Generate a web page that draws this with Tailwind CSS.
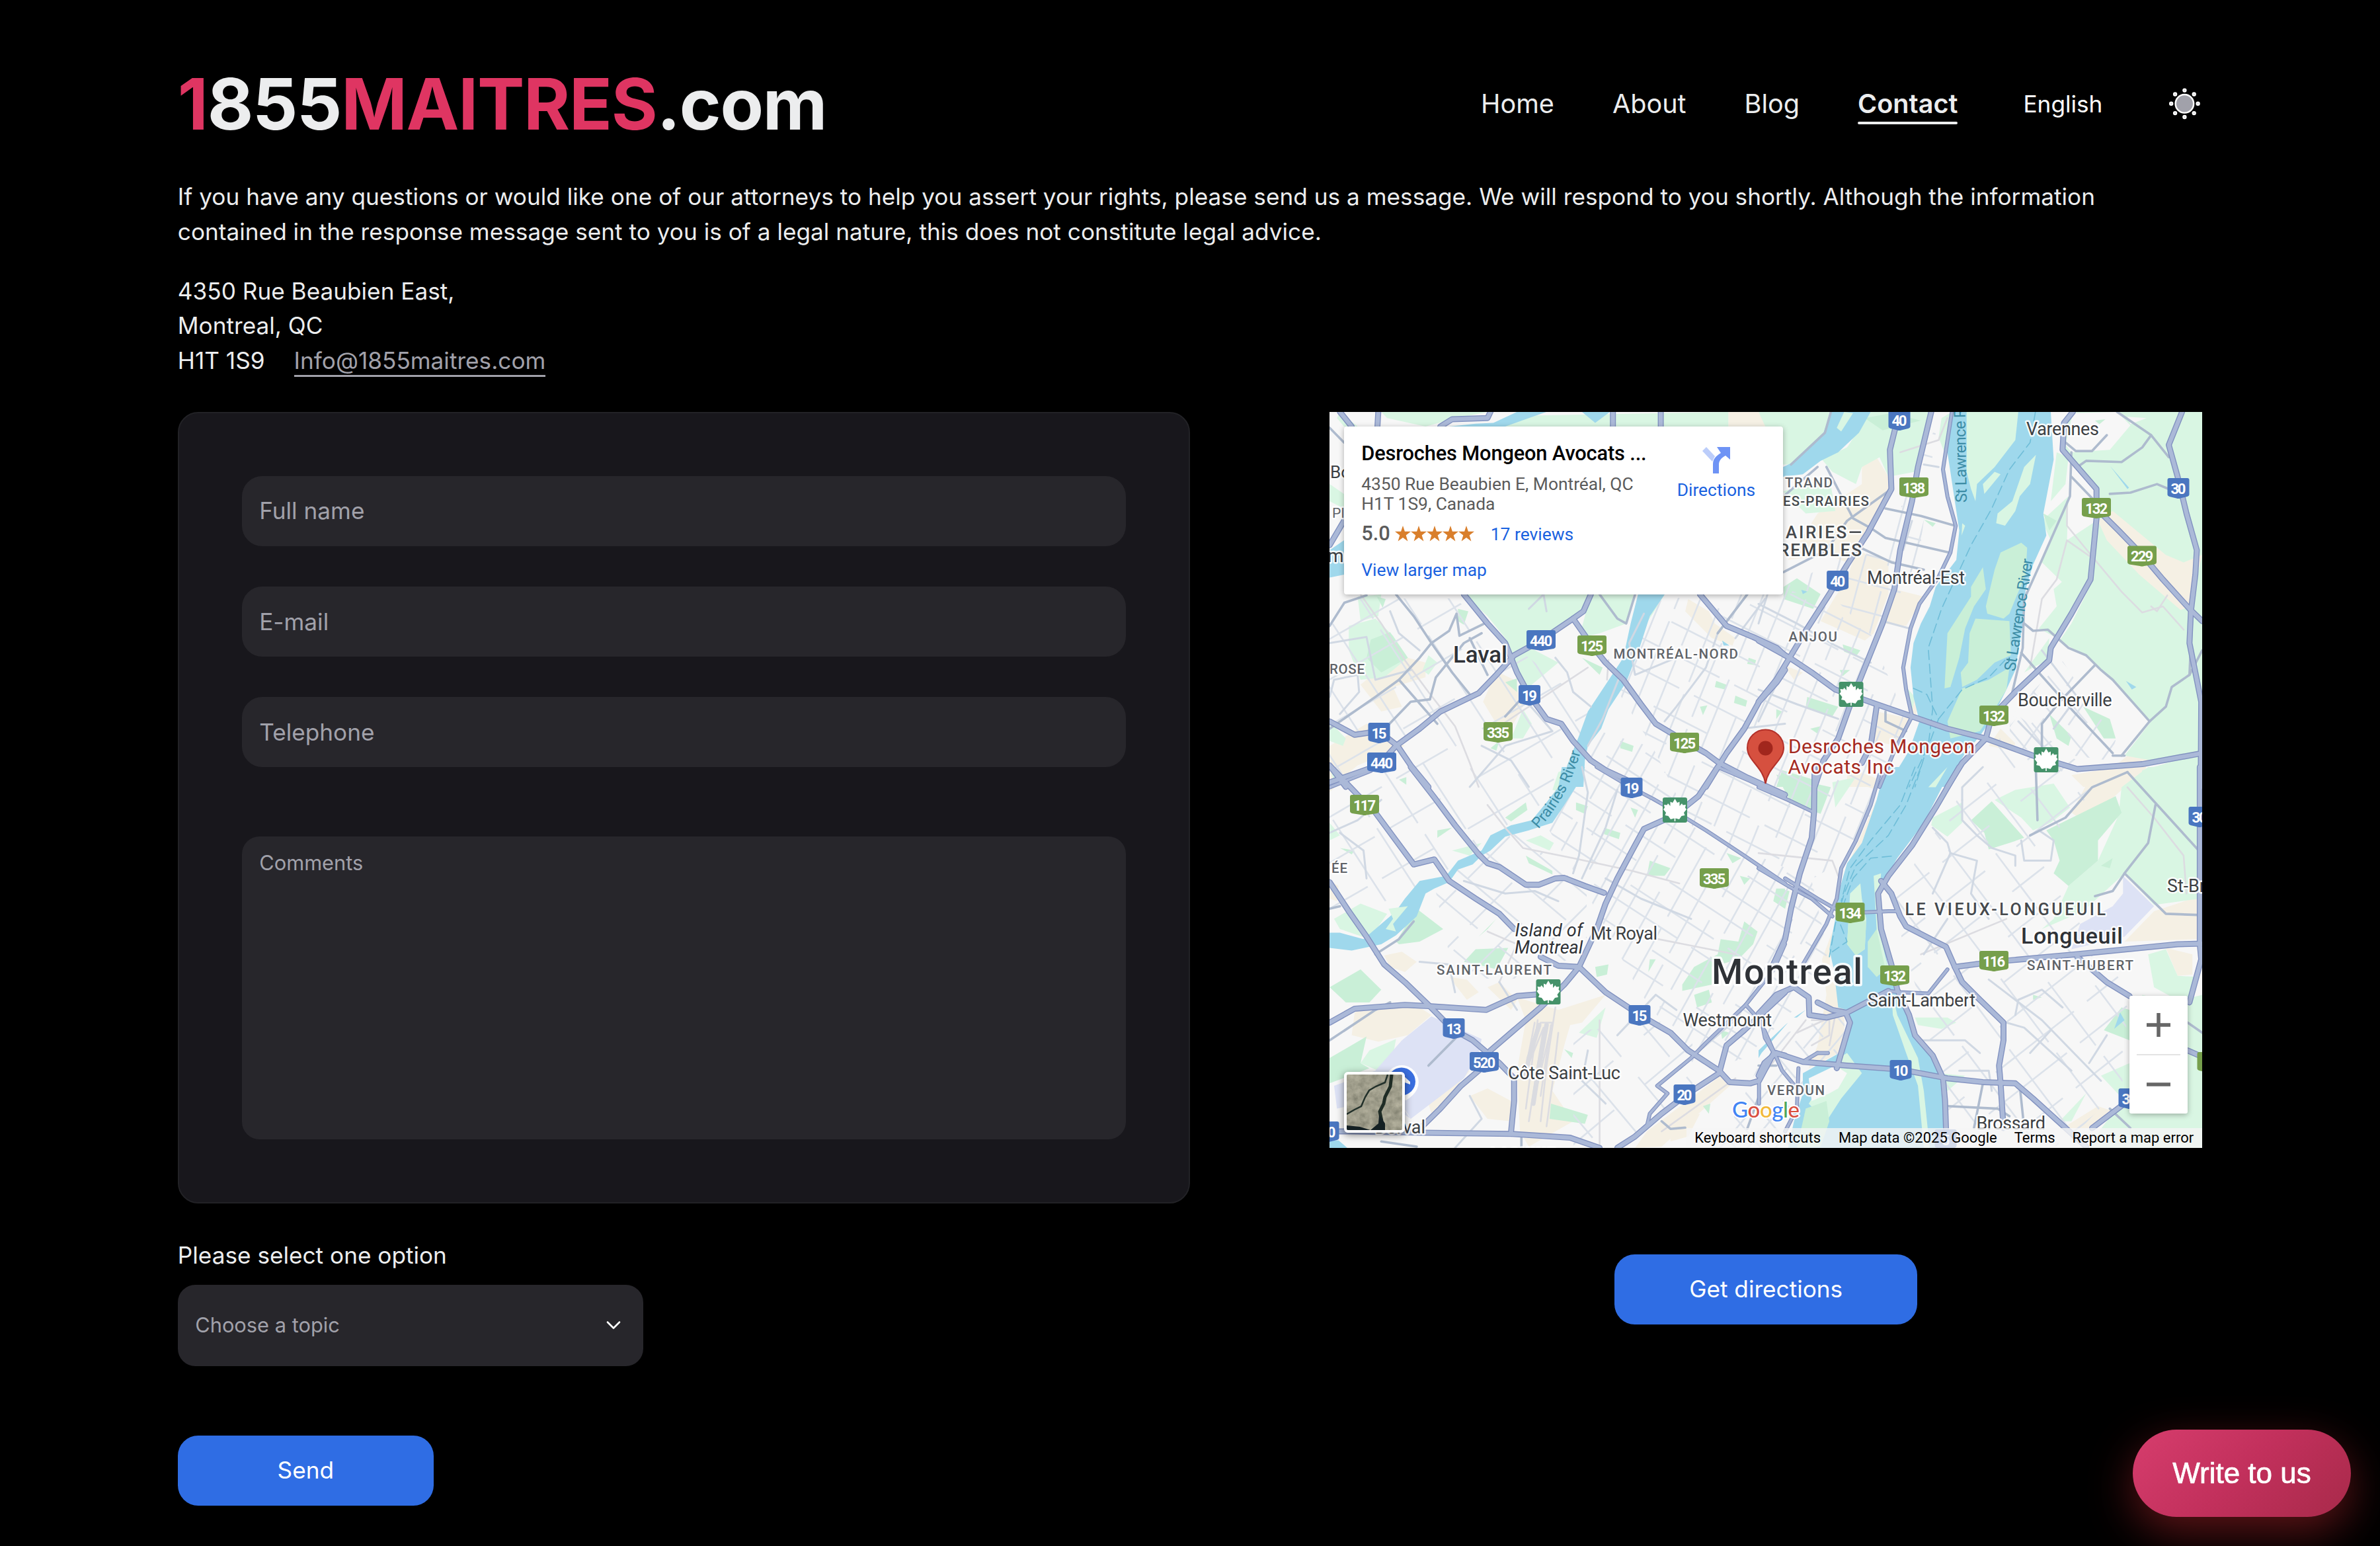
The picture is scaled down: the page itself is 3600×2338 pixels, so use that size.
<!DOCTYPE html>
<html lang="en">
<head>
<meta charset="utf-8">
<title>Contact - 1855MAITRES.com</title>
<script src="https://cdn.jsdelivr.net/npm/@tailwindcss/browser@4"></script>
</head>
<body class="bg-black text-[#ecedee] font-[Inter,sans-serif] text-[35.2px] leading-[52.8px] min-h-[2338px] overflow-hidden">
<div class="mx-auto w-[3062.4px]">

  <header class="flex h-[271px] items-center justify-between pt-[42px]">
    <a id="logo" class="text-[107px] leading-[110px] font-bold tracking-[-1.3px] whitespace-nowrap"><span class="text-[#df3562]">1</span>855<span class="text-[#df3562]">MAITRES</span>.com</a>
    <nav class="flex items-center text-[39.6px] leading-[60px]">
      <a class="mr-[88px]">Home</a>
      <a class="mr-[88px]">About</a>
      <a class="mr-[88px]">Blog</a>
      <a class="relative mr-[99px] font-semibold">Contact<span class="absolute left-0 right-0 top-[57px] h-[4.4px] rounded-full bg-[#ecedee]"></span></a>
      <a class="mr-[98px] text-[35.2px] text-white">English</a>
      <svg class="size-[52.8px]" viewBox="0 0 52.8 52.8" fill="#a1a1aa" stroke="#fff" stroke-width="2.4">
        <circle cx="26.4" cy="26.8" r="13.8"/>
        <g fill="#c4c4ca" stroke-width="2.2"><circle cx="26.4" cy="6.6" r="2.1"/><circle cx="26.4" cy="47" r="2.1"/><circle cx="6.2" cy="26.8" r="2.1"/><circle cx="46.6" cy="26.8" r="2.1"/><circle cx="12.1" cy="12.5" r="2.1"/><circle cx="40.7" cy="12.5" r="2.1"/><circle cx="12.1" cy="41.1" r="2.1"/><circle cx="40.7" cy="41.1" r="2.1"/></g>
      </svg>
    </nav>
  </header>

  <p class="whitespace-nowrap tracking-[0.01px]">If you have any questions or would like one of our attorneys to help you assert your rights, please send us a message. We will respond to you shortly. Although the information<br>contained in the response message sent to you is of a legal nature, this does not constitute legal advice.</p>

  <address class="mt-[37px] h-[209.4px] not-italic">4350 Rue Beaubien East,<br>Montreal, QC<br><span class="flex">H1T 1S9<a class="ml-[44px] h-[51px] border-b-[3px] border-[#a1a1aa] text-[#a1a1aa]">Info@1855maitres.com</a></span></address>

  <main class="flex items-start justify-between">
    <form class="w-[1531.2px]">
      <div class="flex h-[1197px] flex-col rounded-[30.8px] border-2 border-[#222226] bg-[#18171c] px-[95px] pt-[95px]">
        <div class="flex h-[105.6px] items-center rounded-[30.8px] bg-[#27262b] px-[26.4px] text-[#a1a1aa]">Full name</div>
        <div class="mt-[61.6px] flex h-[105.6px] items-center rounded-[30.8px] bg-[#27262b] px-[26.4px] text-[#a1a1aa]">E-mail</div>
        <div class="mt-[61.6px] flex h-[105.6px] items-center rounded-[30.8px] bg-[#27262b] px-[26.4px] text-[#a1a1aa]">Telephone</div>
        <div class="mt-[105px] h-[457.6px] rounded-[26.4px] bg-[#27262b] px-[26.4px] pt-[17.6px] text-[30.8px] leading-[44px] text-[#a1a1aa]">Comments</div>
      </div>
      <label class="mt-[52px] block">Please select one option</label>
      <div class="mt-[18px] flex h-[123.2px] w-[704px] items-center justify-between rounded-[26.4px] bg-[#27262b] pl-[26.4px] pr-[33px] text-[30.8px] leading-[44px] text-[#a1a1aa]">Choose a topic
        <svg class="h-[16px] w-[24px]" viewBox="0 0 24 16" fill="none" stroke="#fff" stroke-width="2.6" stroke-linecap="round" stroke-linejoin="round"><path d="M3 3.5l9 9 9-9"/></svg>
      </div>
      <button type="button" class="mt-[105px] flex h-[105.6px] w-[387px] items-center justify-center rounded-[30.8px] bg-[#2f6de4] text-white">Send</button>
    </form>

    <section class="flex w-[1320px] flex-col items-center">
      <div class="relative h-[1113px] w-[1320px] overflow-hidden font-[Roboto,sans-serif] text-black">
        <svg id="map" class="block h-[1113px] w-[1320px] font-[Roboto,sans-serif]" viewBox="2011 623 1320 1113"></svg>

        <!-- place card -->
        <div class="absolute left-[22px] top-[22px] flex h-[254px] w-[664px] justify-between rounded-[4px] bg-white pl-[26px] pr-[42px] text-[26.4px] leading-[30px] text-[#1a62e0] shadow-[0_2px_8px_rgba(0,0,0,0.3)]">
          <div class="pt-[21px]">
            <div class="text-[30.8px] leading-[40px] font-medium tracking-[-0.15px] text-black">Desroches Mongeon Avocats ...</div>
            <div class="mt-[11px] text-[#5b5b5b]">4350 Rue Beaubien E, Montréal, QC<br>H1T 1S9, Canada</div>
            <div class="mt-[10px] flex h-[40px] items-center"><span class="text-[30.8px] font-medium text-[#5b5b5b]">5.0</span>
              <svg class="ml-[7px] h-[24px] w-[120px]" viewBox="0 0 120 24" fill="#d97f2c"><path id="star" d="M12 0l2.900 8.800h9.100l-7.300 5.600 2.700 9L12 17.900l-7.400 5.500 2.700-9L0 8.800h9.100z"/><use href="#star" x="24"/><use href="#star" x="48"/><use href="#star" x="72"/><use href="#star" x="96"/></svg>
              <span class="ml-[25px] pt-[3px]">17 reviews</span></div>
            <div class="mt-[20px]">View larger map</div>
          </div>
          <div class="flex flex-col items-center pt-[30px]">
            <svg class="h-[41px] w-[42px]" viewBox="0 0 42 41"><path d="M0 7L6 1l13 14-4 8z" fill="#bccdfa"/><path d="M16 41V27c0-8 4-12 12-17l-6-9h20v19l-7-6c-7 4-10 8-10 14v13z" fill="#6e93f5"/></svg>
            <div class="mt-[10px]">Directions</div>
          </div>
        </div>

        <!-- satellite toggle -->
        <div class="absolute left-[22px] top-[998px] h-[92px] w-[92px] overflow-hidden rounded-[6px] border-4 border-white shadow-[0_3px_12px_rgba(0,0,0,0.5)]">
          <svg class="size-full" viewBox="0 0 84 84"><filter id="ground"><feTurbulence type="fractalNoise" baseFrequency=".1" numOctaves="4" seed="8"/><feColorMatrix values=".32 0 0 0 .19  .3 0 0 0 .19  .24 0 0 0 .14  0 0 0 0 1"/></filter><rect width="84" height="84" filter="url(#ground)"/><path d="M62 0L58 12 44 18 34 24 28 34 22 48 12 53 0 60" fill="none" stroke="#22302a" stroke-width="2.5"/><path d="M68 0L66 18 58 34 56 44 50 56 53 70" fill="none" stroke="#1f2c25" stroke-width="5"/><path d="M49 60l9 14 0 10H36l12-10zM0 77l20 2 16 5H0z" fill="#142023"/></svg>
        </div>

        <!-- zoom control -->
        <div class="absolute left-[1210px] top-[883px] flex h-[178px] w-[88px] flex-col items-center rounded-[3px] bg-white shadow-[0_2px_8px_rgba(0,0,0,0.3)]">
          <svg class="h-[88px] w-[88px]" viewBox="0 0 88 88" stroke="#666" stroke-width="5.5"><path d="M26 44h36M44 26v36"/></svg>
          <div class="h-[2px] w-[66px] bg-[#e3e3e3]"></div>
          <svg class="h-[88px] w-[88px]" viewBox="0 0 88 88" stroke="#666" stroke-width="5.5"><path d="M26 44h36"/></svg>
        </div>

        <!-- attribution -->
        <div class="absolute bottom-0 right-0 flex h-[30px] items-center bg-[#f5f5f5]/80 pl-[12px] pr-[13px] pt-px text-[22px] leading-[30px] whitespace-nowrap">
          <span>Keyboard shortcuts</span><span class="ml-[27px]">Map data ©2025 Google</span><span class="ml-[26px]">Terms</span><span class="ml-[26px]">Report a map error</span>
        </div>
      </div>
      <button type="button" class="mt-[161px] flex h-[105.6px] w-[458px] items-center justify-center rounded-[30.8px] bg-[#2f6de4] text-white">Get directions</button>
    </section>
  </main>
</div>

<button type="button" class="fixed left-[3226px] top-[2162px] flex h-[132px] w-[330px] items-center justify-center rounded-full bg-[linear-gradient(135deg,#d63d6d_0%,#c2305c_50%,#a82a4a_100%)] font-['Liberation_Sans',sans-serif] text-[44px] font-normal text-white shadow-[0_22px_66px_rgba(185,40,45,0.5)] [-webkit-text-stroke:0.7px_white]">Write to us</button>

<script>
const NS = 'http://www.w3.org/2000/svg';
const map = document.getElementById('map');
function add(tag, attrs, parent, text) {
  const e = document.createElementNS(NS, tag);
  for (const k in attrs) e.setAttribute(k, attrs[k]);
  if (text) e.textContent = text;
  (parent || map).appendChild(e);
  return e;
}
// Each tile has its own local grid: [origin x, origin y, scale x, scale y].
const TILE = {
  A: [2000, 610, 0.44643, 0.3699],
  B: [2660, 610, 0.44643, 0.3699],
  C: [2000, 1160, 0.44643, 0.38265],
  D: [2660, 1160, 0.44643, 0.38265]
};
const conv = (t, s) => s.trim().split(' ').map(p => {
  const [x, y] = p.split(',').map(Number), T = TILE[t];
  return (T[0] + x * T[2]).toFixed(1) + ',' + (T[1] + y * T[3]).toFixed(1);
}).join(' ');
const areas = (fill, data) => { for (const t in data) data[t].forEach(s => add('polygon', { points: conv(t, s), fill })); };
const lines = (stroke, w, data, extra) => { for (const t in data) data[t].forEach(s => add('polyline', Object.assign({ points: conv(t, s), fill: 'none', stroke, 'stroke-width': w, 'stroke-linejoin': 'round', 'stroke-linecap': 'round' }, extra))); };

add('rect', { x: 2011, y: 623, width: 1320, height: 1113, fill: '#f7f7f7' });

areas('#f5f0e4', {
  A: ['1376,35 1568,35 1568,95 1376,95', '1240,800 1310,850 1330,900 1400,960 1390,990 1320,960 1230,850', '290,1040 350,1060 350,1120 240,1160 270,1240 200,1260 130,1150 190,1090', '590,1095 650,1130 680,1240 620,1370 545,1220', '25,1400 150,1310 280,1400 120,1480 60,1540 25,1500'],
  B: ['0,35 110,35 0,95', '100,640 200,450 350,330 350,240 400,220 440,300 440,400 340,560 300,650 235,620', '330,600 440,650 440,780 390,940 360,970 210,890 260,790 300,720', '460,760 560,790 500,910 420,900', '510,1210 545,1210 530,1290 510,1250', '85,1070 150,1100 120,1130', '820,1330 870,1390 860,1420 780,1400', '1250,1440 1330,1430 1290,1568 1100,1568 1060,1520 1200,1490', '400,1260 520,1290 470,1400 390,1380', '300,1510 410,1560 400,1568 300,1568'],
  C: ['210,745 270,730 320,770 280,810 230,790', '160,940 330,950 370,980 290,1060 190,1085 100,1060 110,970', '430,830 490,840 530,890 490,920', '560,870 600,850 660,920 640,960', '660,910 800,960 960,900 880,1010 840,1020 820,1100 780,1280 850,1400 700,1500 670,1440 660,1200 690,1000', '500,1300 560,1270 640,1320 640,1400 560,1390', '25,450 55,470 50,530 25,520', '25,0 60,60 25,100', '360,1330 420,1210 500,1200 420,1310 370,1370', '1100,1440 1350,1220 1400,1240 1150,1500 1060,1505', '1180,1400 1280,1370 1240,1460 1180,1480'],
  D: ['300,0 410,50 400,90 320,60', '400,130 440,140 350,300 290,420', '1060,180 1120,50 1250,20 1320,10 1300,80 1230,90 1110,220', '1340,570 1495,510 1495,680 1240,690', '1380,715 1470,740 1470,820 1420,825', '1030,1427 1150,1340 1200,1360 1120,1427', '215,760 250,650 240,800 290,900 290,1120 170,1190 200,1100 230,900']
});
areas('#d9f6e3', {
  A: ['60,35 120,95 74,95 50,60', '200,35 560,35 440,65 350,95 220,60', '700,50 1376,35 1376,95 600,95', '480,781 910,781 860,880 800,930 690,990 800,1060 690,1170 655,1090 620,960 560,870', '25,330 74,370 74,430 25,400', '90,910 180,880 240,950 290,1040 210,1120 130,1130 90,1010', '120,790 200,781 190,870 130,890', '910,781 1055,781 1030,900 940,940 870,960 890,870', '25,1300 80,1370 70,1400 25,1380', '680,1250 710,1310 680,1370 640,1370', '360,1030 390,1060 360,1110 340,1090', '1160,781 1120,860 1070,950 1060,900'],
  B: ['0,35 240,35 225,120 110,250 83,250', '380,35 580,35 530,280 440,300 410,220 350,260 330,330 250,280 215,230 300,180', '83,360 240,300 260,440 160,450', '620,60 655,35 630,200 610,140', '1065,35 1503,35 1503,1440 1380,1470 1240,1440 1330,1300 1200,1130 1130,1050 1020,970 1060,900 1130,730 1145,470 1145,350 1060,230 1030,180 1035,70', '960,480 1050,380 1045,560 1145,480 1125,730 1010,960 950,920 1010,830 1000,760 1028,730 960,650 990,560', '900,1100 985,960 980,1050 930,1080', '1300,1500 1503,1430 1503,1568 1290,1568', '500,1160 530,1200 520,1260', '1010,200 1050,220 1040,330 990,400'],
  C: ['40,600 130,540 220,580 160,680 60,640', '690,290 740,270 785,300 770,330', '130,1170 160,1120 250,1075 240,1140 190,1200', '870,1050 960,950 930,1070', '25,220 60,270 25,290', '800,20 840,0 820,100 780,90', '440,330 540,300 500,350', '25,0 70,60 45,80'],
  D: ['1320,0 1495,0 1495,520 1340,545 1240,420 1100,570 960,640 1000,600 1050,470 1150,370 1220,190 1230,80', '590,200 690,140 690,220 640,275 585,230', '800,130 870,90 1000,65 1055,160 990,220 930,250 890,200', '530,990 640,990 670,1010 620,1035 540,1020', '1320,740 1380,720 1420,825 1495,830 1450,940 1340,870', '1503,900 1503,1505 1120,1505 1160,1430 1257,1280 1300,900 1400,930', '1160,1220 1257,1170 1257,1340', '1020,1400 1110,1290 1060,1400', '330,40 260,160 250,60', '450,960 500,960 500,1100', '520,1200 700,1220 640,1280 560,1270']
});
areas('#f5f0e4', { B: ['1150,480 1200,440 1380,620 1440,650 1503,620 1475,760 1465,830 1430,845 1290,700 1180,560'] });
areas('#f7f7f7', { B: ['1065,40 1215,35 1260,90 1190,190 1060,200 1040,170', '1250,55 1315,60 1260,85'] });
areas('#c9efd7', {
  A: ['165,965 230,935 290,1040 200,1100 150,1040', '460,840 495,850 480,905 460,890', '620,1140 660,1125 660,1180', '185,790 215,800 205,835', '880,1040 950,1080 940,1110', '1335,1135 1370,1150 1365,1170 1330,1160', '1280,1240 1305,1235 1290,1275', '1400,1195 1440,1215 1435,1240 1395,1225', '1010,1380 1055,1400 1050,1425 1010,1410', '1445,1040 1470,1050 1465,1070 1440,1065', '570,1410 600,1380 590,1420'],
  B: ['85,750 130,715 210,780 185,840 85,800', '285,985 345,1010 330,1035 290,1015', '165,1200 270,1240 250,1280 160,1240', '985,1270 1060,1360 1050,1400 1010,1370', '1100,1240 1190,1290 1210,1370 1170,1370', '560,475 600,490 590,505', '360,60 450,40 550,70 420,110', '965,450 1010,480 985,520', '175,1330 210,1320 200,1350', '275,1090 310,1090 285,1115', '60,1250 80,1260 60,1290', '80,1500 190,1540 180,1568 60,1568', '1140,70 1175,65 1155,85'],
  C: ['250,690 320,560 410,640 330,690 260,700', '25,870 130,800 200,880 160,930 80,930', '480,770 520,720 630,715 590,800 560,790', '25,1150 150,1065 130,1170 160,1190 25,1250', '1220,860 1260,790 1340,740 1350,680 1410,690 1430,610 1475,650 1460,700 1410,760 1320,790 1320,860 1220,885', '1260,900 1310,880 1320,930 1270,950', '1110,370 1180,400 1160,430 1100,430', '860,140 900,155 890,185 860,170', '955,240 1010,260 1005,285 955,265', '620,200 690,140 695,170 640,215', '690,350 780,410 780,425 700,380', '775,1330 900,1375 890,1410 770,1390', '925,790 970,780 965,820 930,830', '390,250 440,240 390,280', '60,320 110,330 100,345', '260,50 285,40 285,70', '530,670 590,600 560,640', '1045,160 1070,170 1060,200', '1370,340 1420,360 1390,380', '1415,430 1450,440 1430,465', '820,1115 850,1130 845,1150', '1290,1340 1315,1330 1310,1370', '1350,1040 1380,1050 1355,1075', '1540,480 1568,480 1568,560 1530,530', '1110,760 1130,760 1105,810'],
  D: ['60,30 245,80 210,185 110,140', '975,250 1210,115 1230,180 1150,290 1150,370 1050,470 1000,420 1020,370 1000,290', '720,210 790,135 900,280 850,300 780,325 765,260', '1170,1040 1230,950 1257,960 1257,1080', '60,480 105,490 90,560 50,530', '930,900 960,910 930,920', '1160,390 1200,360 1190,400']
});
areas('#dde2f5', { C: ['370,985 540,1075 530,1130 480,1230 300,1390 290,1370 180,1200 270,1080', '40,1260 180,1200 300,1390 200,1310 50,1350'], D: ['1235,430 1340,550 1240,670 1060,720 1090,620 1200,550 1235,500'] });

// Local street grids, clipped to a neighbourhood outline.
function streets(id, poly, cx, cy, a1, s1, a2, s2) {
  const cp = add('clipPath', { id });
  add('polygon', { points: poly }, cp);
  const g = add('g', { 'clip-path': 'url(#' + id + ')', stroke: '#dce2ea', 'stroke-width': 2.6 });
  [[a1, s1], [a2, s2]].forEach(([a, s], k) => {
    for (let i = -22; i <= 22; i++) {
      const r = a * Math.PI / 180, off = i * s + ((i * 37) % 7) - 3;
      const x = cx - Math.sin(r) * off, y = cy + Math.cos(r) * off, dx = Math.cos(r) * 600, dy = Math.sin(r) * 600;
      add('line', { x1: x - dx, y1: y - dy, x2: x + dx, y2: y + dy, 'stroke-dasharray': k ? '150 25 90 60' : '210 40 120 20', 'stroke-dashoffset': i * 47 }, g);
    }
  });
}
streets('s1', '2500,910 2700,880 2830,960 2880,1080 2860,1180 2790,1300 2740,1330 2560,1250 2500,1130 2450,1050', 2650, 1100, 112, 29, 27, 40);
streets('s2', '2400,1100 2500,1130 2560,1250 2740,1330 2765,1440 2740,1500 2640,1600 2570,1620 2480,1500 2400,1350 2340,1250', 2600, 1300, 119, 27, 33, 34);
streets('s3', '2011,905 2200,905 2420,1080 2360,1200 2290,1240 2170,1330 2011,1400', 2200, 1130, 57, 54, -30, 58);
streets('s4', '2860,1360 2960,1210 3050,1080 3180,1180 3080,1290 3120,1360 3220,1500 3210,1640 3120,1736 2950,1690 2900,1500', 3000, 1450, 53, 52, -38, 48);
streets('s5', '2170,1340 2290,1250 2400,1350 2400,1440 2300,1480 2200,1480', 2300, 1400, 40, 46, -45, 50);
streets('s6', '2380,1560 2560,1540 2560,1640 2450,1736 2380,1736', 2450, 1600, 50, 54, -40, 56);
streets('s7', '3040,1080 3120,1000 3200,1120 3190,1150 3040,1130', 3100, 1080, 50, 30, -55, 34);
streets('s8', '2690,900 2760,890 2830,960 2900,860 2930,640 2870,780', 2830, 800, 105, 34, 15, 40);
streets('s9', '2680,1570 2790,1530 2790,1640 2740,1736 2600,1736', 2720, 1640, 130, 30, 50, 34);

areas('#9fd8ec', {
  A: ['1070,781 1160,781 1110,870 1075,1000 1030,1140 970,1250 945,1330 900,1400 890,1460 885,1568 812,1568 830,1480 870,1360 900,1260 960,1150 1020,1040 1045,900', '430,95 520,83 580,80 660,35 760,35 700,60 620,95', '880,35 975,35 925,80', '25,600 74,560 74,700 25,712', '1355,970 1380,990 1360,990'],
  B: ['245,35 380,35 340,120 270,200 210,235 150,290 83,300 83,260 110,245 220,120', '650,35 640,200 665,400 680,520 670,640 600,750 580,830 550,900 525,980 515,1080 525,1200 545,1300 510,1420 435,1568 630,1568 700,1430 750,1360 790,1290 840,1170 870,1090 900,860 905,760 930,660 975,540 965,450 1000,230 990,35', '1245,1135 1280,1160 1265,1170', '145,762 165,770 150,780', '1190,255 1255,345 1250,350'],
  C: ['812,0 890,0 870,60 820,150 780,220 700,250 620,275 570,330 540,350 510,385 460,405 430,455 380,480 350,500 320,590 250,665 200,700 100,725 25,715 25,655 60,655 140,680 200,620 250,570 280,520 330,450 420,430 460,370 540,330 570,270 640,230 710,210 760,140 800,80', '25,1478 55,1475 85,1505 25,1505'],
  D: ['430,0 400,130 350,300 300,380 275,480 260,600 240,720 255,800 270,950 300,960 310,1000 290,1120 150,1210 150,1290 120,1400 100,1505 640,1505 610,1180 560,1090 520,1040 480,900 440,800 405,560 405,490 470,360 560,220 630,60 660,0', '1225,970 1240,1000 1205,1035', '100,1010 10,1130 0,1150 0,1120 90,1020', '160,960 130,990 120,990']
});
areas('#d9f6e3', {
  B: ['705,35 880,35 870,150 800,260 740,330 735,400 720,350 705,280', '760,330 800,280 820,290 765,370', '900,260 940,210 920,330 885,380 870,440 835,500 805,490 810,450 860,400', '690,490 700,500 688,540', '265,100 290,35 320,40 280,115'],
  C: ['215,640 240,600 225,560 290,550 240,620 250,650'],
  D: ['310,500 345,460 350,520 365,600 360,720 330,745 300,700', '390,430 415,420 405,560 420,700 440,800 410,820 400,640', '450,880 470,980 540,1150 560,1280 580,1505 560,1505 540,1260 500,1130 455,980', '575,80 640,0 600,80', '270,1150 300,1130 350,1210 280,1310 230,1400 170,1330']
});
areas('#c9efd7', {
  B: ['820,610 890,570 910,590 905,700 870,800 850,860 830,880 775,860 770,830 800,680', '735,880 850,890 855,1030 800,1060 740,1130 690,1160 685,1100 710,1060 715,940', '760,670 770,760 730,830 700,920 680,1040 650,1160 630,1165 640,940 720,790 720,750', '690,1165 780,1130 850,1080 840,1170 790,1270 750,1340 650,1370 640,1300'],
  D: ['305,600 365,610 360,720 330,745 300,700', '370,690 400,640 430,800 400,830 370,790', '160,1350 230,1320 240,1400 210,1500 130,1505']
});
areas('#f7f7f7', { B: ['850,1320 900,1180 930,1210'], D: ['170,1230 260,1180 300,1210 270,1270 240,1290 180,1320'] });
lines('#6fbdd8', 1.6, { B: ['938,35 920,160 850,270 790,430 720,580 620,840 575,1000 590,1250 575,1400 510,1568', '525,1165 570,1190 610,1290 690,1170 780,1120 835,1050', '610,1290 560,1450 530,1568'], D: ['550,0 500,150 440,270 330,390 290,500 260,620 240,750', '530,0 480,150 380,290 310,400 280,530', '450,352 380,360 320,440 270,600 300,690 250,730'] }, { 'stroke-dasharray': '14 7' });

lines('#dcdce1', 2.6, {
  A: ['130,781 200,900 280,1050 360,1180 450,1320 500,1470 530,1568', '600,1320 900,1080', '970,1050 965,1130'],
  B: ['1045,400 1045,500 1140,640 1230,770 1300,855 1370,830 1440,925', '1385,785 1350,850 1330,830', '1140,640 1045,560 1010,720 960,800 920,1080', '640,60 610,150 480,200'],
  C: ['560,150 620,240 680,320 850,360 1050,410 1210,460', '700,1150 740,1010 780,1010 720,1300', '690,1200 750,1030 700,1400', '730,1000 690,1350', '790,950 760,1180 740,1400', '800,1050 780,1250 760,1420', '720,1010 700,1130', '775,1020 740,1300', '940,1000 940,1500', '600,850 660,700 560,650', '1050,660 1400,740', '1400,1230 1150,1440'],
  D: ['1250,80 1340,200 1440,350 1450,500', '0,340 250,370 270,430', '180,1000 240,1000 240,1060 180,1100', '130,1050 260,980 240,1100', '0,1240 160,1000', '840,600 550,740']
});
lines('#dadbe0', 7, { C: ['735,1020 700,1150 690,1220', '760,1020 735,1180 715,1330'] });
lines('#d0d8e3', 3, {
  A: ['25,980 150,955 180,1130 300,1090', '230,850 260,940 330,1010', '25,1200 40,1130 120,1110 125,1180 60,1270', '790,1040 830,1100 850,1180 910,1240', '1090,860 1040,980 1060,1110 1200,1040', '700,1230 780,1340 620,1400 500,1568', '540,1400 640,1460 700,1568', '700,840 750,781 760,850', '1010,1110 950,1290 900,1400', '1420,1330 1568,1310', '1440,781 1340,940 1300,1080 1200,1240 1160,1300', '1500,800 1400,960'],
  B: ['0,820 130,900 260,990 380,1060', '0,1170 130,1230 270,1290', '420,890 510,920', '30,781 0,900', '60,1150 0,1300', '520,480 490,600', '560,250 610,260', '960,1010 1080,1200 1000,1330', '880,1300 960,1400'],
  C: ['25,260 120,210 200,130', '150,440 140,330 60,260', '480,450 620,500 720,490 800,530', '880,0 900,100 870,350 850,420', '1000,90 960,240 880,440', '450,890 430,780 330,770', '600,850 660,960', '1000,1060 1130,900 1200,960', '960,440 1080,520 1250,600', '900,1120 880,1240 960,1330', '1400,1000 1290,1110', '500,1300 540,1390 450,1505'],
  D: ['690,130 690,210 740,270 790,320 870,350 870,390', '690,130 690,80 760,0', '890,290 900,370 990,370 1000,290 950,250', '590,240 640,300 650,340 740,370 720,500 780,600', '650,340 590,500', '870,980 880,920 960,880 1030,950', '840,1010 900,1030 1060,1200', '780,840 960,1000 1160,1240', '560,740 640,600', '540,1080 700,1080 750,1130', '680,1200 780,1200 790,1280', '990,1040 920,1130', '1120,1170 1180,1060']
});
lines('#aebbce', 3.6, {
  A: ['25,910 75,815 150,785', '250,781 310,870 370,980 440,1100 500,1190', '25,1330 180,1200 260,1130 330,1040 370,980 430,930 455,860 465,950 550,900', '260,1130 390,1310', '365,1210 385,1120 480,980 540,940', '940,781 1000,880 1030,900 1060,781', '620,1280 680,1200', '180,1370 300,1220 365,1210', '25,100 74,160', '500,960 560,1110', '1440,781 1340,940'],
  B: ['245,35 225,120 110,250', '430,430 550,460 665,500', '380,510 430,550 645,610', '345,590 450,650 560,680', '85,690 230,600 300,480 450,350', '230,260 290,400 320,470 380,510', '1215,35 1330,130 1390,220', '1330,130 1300,180 1230,240 1110,235 1080,260', '1190,370 1260,365 1350,330 1390,350', '1060,200 1055,380 960,640 900,800 895,1000 860,1180', '900,900 930,930 980,925 1050,1000 1110,1030 1160,1090 1200,1130 1325,1300', '1503,1010 1460,1110 1400,1160 1380,1240 1325,1300 1230,1440', '890,1020 1060,1250 1200,1430', '1140,1070 1020,1220 960,1310 960,1430', '430,1260 430,1300 500,1340', '1060,300 1140,400', '1470,850 1460,1110', '1200,1440 1240,1440', '200,260 85,380', '1040,160 1075,195 1130,195 1180,130'],
  C: ['25,1080 180,960 230,930', '310,610 260,680 180,740', '360,1180 470,1050', '675,1460 675,1505', '1150,1400 1180,1430 1230,1425', '1480,1300 1440,1430', '200,1480 320,1500', '25,560 60,550'],
  D: ['1345,150 1320,300 1240,420 1200,490 1140,510', '1240,420 1380,580 1503,585', '940,20 945,210', '1250,20 1503,345', '1250,20 1130,80 1040,200 920,270', '1454,1010 1503,1050', '760,1250 730,1427', '640,1340 810,1350 850,1380', '885,1260 900,1427', '1190,1350 1260,1427', '60,1180 0,1180']
});

const highways = {
  A: ['480,781 560,900 620,980 660,1100 700,1190 730,1240 760,1290 810,1310 850,1380 910,1460 960,1500 1050,1550', '910,781 885,850 850,880 740,970 650,1030 590,1110 530,1185 400,1260 330,1330 250,1400 190,1480 25,1550', '850,880 914,990 960,1060 1020,1130 1080,1230 1130,1310 1227,1380 1300,1430 1345,1470 1440,1530 1568,1600', '25,1300 110,1355 192,1340 255,1400 300,1480 360,1568', '1280,781 1370,910 1460,955 1540,1000 1568,1030', '1568,1090 1540,1140 1480,1220 1430,1330 1370,1430 1300,1568', '25,1480 80,1568', '190,35 187,95', '60,35 100,95', '570,35 560,60 440,65 400,95', '985,35 985,95', '1147,35 1147,95', '25,580 74,480'],
  B: ['477,35 445,190 450,350 370,530 300,660 240,780 160,930 105,1040 60,1130 0,1220', '0,970 105,1040 180,1100 260,1170 400,1230 520,1280 640,1330 770,1370 930,1440 1080,1495 1300,1475 1503,1430', '585,35 540,260 520,400 480,600 460,760 420,900 370,1050 320,1200 270,1370 220,1460 190,1568', '1065,35 1035,80 1030,190 1145,350 1145,470 1125,720 1060,860 990,1000 985,1050 870,1180 790,1280 770,1370 690,1470 640,1568', '1145,430 1220,520 1300,620 1370,720 1460,840 1503,890', '1435,35 1390,170 1420,300 1450,450 1485,600 1480,700 1465,850 1460,980 1480,1100 1500,1220 1498,1568', '400,1240 380,1400 350,1470'],
  C: ['300,0 380,120 450,230 530,345 560,380 600,395 690,465 735,465 790,440 820,438 890,470 955,497', '1340,0 1275,115 1195,190 1090,245 1050,330 1000,440 960,540 930,640 870,790 820,860 740,950 660,1030 570,1120 530,1200 470,1260 400,1350 330,1430', '30,0 120,110 180,180 310,385 380,365 430,450 520,520 600,580 650,640', '740,750 800,785 870,790 960,890 1076,980 1180,1050 1240,1120 1345,1200 1380,1245 1450,1250 1480,1240 1530,1130 1568,1140', '25,455 90,570 150,670 210,780 280,850 360,940 440,1035 510,1080 560,1130 600,1170 650,1230 650,1320 640,1440', '25,1010 110,955 280,940 360,945 555,960 660,905 766,895', '1000,1505 1060,1460 1150,1370 1240,1290 1345,1210 1370,1100 1430,1040 1568,890', '25,1440 100,1440 340,1445 640,1450 840,1465 940,1505'],
  D: ['680,0 600,160 520,310 440,430 405,500 415,640 450,780 470,880 510,980 530,1060 590,1140 625,1230 632,1320 635,1427', '190,0 188,180 180,280 140,420 110,560 90,680 50,780', '665,790 797,770 1075,740 1420,700 1503,698', '415,450 450,500 480,590 500,630 600,690 635,710 665,790 690,850 750,920 830,1010 830,1080 815,1180 820,1250 830,1427', '0,975 60,900 120,870 170,910 172,980 230,990 300,970 440,885', '200,930 250,960 295,970 310,1010 290,1090 265,1190', '0,1220 20,1170 60,1130 150,1165 300,1180 480,1195 640,1230 760,1245 870,1250 930,1310 1110,1500', '1080,750 1180,850 1257,905', '1495,0 1495,700 1500,760 1460,930', '1454,1120 1503,1145', '1130,1427 1240,1330']
};
const arterials = {
  B: ['655,35 625,270 640,380 668,500 650,610 610,710 545,820 515,920 490,1080 500,1170 520,1280 460,1420 410,1568'],
  C: ['25,80 165,15', '930,0 1049,82 1120,125 1195,175 1300,250 1430,350 1568,460', '1340,0 1450,55 1568,120', '1435,940 1300,1090 1250,1150 1135,1260 1170,1290 1110,1370 1100,1420', '1568,700 1530,800 1435,940 1490,1010 1500,1070 1530,1130', '1480,1240 1480,1330'],
  D: ['410,30 380,150 330,290 280,400 265,520 230,620 190,700 150,780', '0,80 100,130 190,180', '0,400 100,470 180,520 250,590', '90,440 200,520 260,560', '20,1040 80,1200 130,1270', '135,1190 130,1350 90,1440', '200,1130 235,1130', '310,577 440,570 470,570', '440,885 480,890 575,895 640,800', '150,1165 200,1130']
};
lines('#8292c0', 6, arterials);
lines('#8292c0', 9, highways);
lines('#a9b7d7', 3.6, arterials);
lines('#abb9d8', 6.2, highways);

// Route shields
const shield = (n, x, y, c) => {
  const w = n.length > 2 ? 22 : 16.5;
  add('path', { d: `M${x - w + 3} ${y - 16}H${x + w - 3}q3 0 3 3V${y + 9}q0 2-3 3L${x + 3} ${y + 14.5}q-3 1-6 0L${x - w + 3} ${y + 12}q-3-1-3-3V${y - 13}q0-3 3-3z`, fill: c === 'g' ? '#769f4c' : '#4a76c0' });
  add('text', { x, y: y + 7.5, fill: '#fff', 'font-size': 22, 'font-weight': 700, 'text-anchor': 'middle', textLength: n.length * 11.4 }, map, n);
};
[['440', 2331, 969, 'b'], ['125', 2408, 977, 'g'], ['19', 2313.5, 1052, 'b'], ['335', 2266, 1108, 'g'], ['15', 2086, 1109, 'b'], ['440', 2090, 1154, 'b'], ['125', 2548, 1124, 'g'], ['40', 2873, 636, 'b'], ['138', 2895, 738, 'g'], ['40', 2779.6, 879, 'b'], ['132', 3171, 769, 'g'], ['30', 3295, 739, 'b'], ['229', 3240, 841.5, 'g'], ['132', 3016, 1083, 'g'], ['19', 2468, 1192, 'b'], ['117', 2064, 1218, 'g'], ['335', 2593, 1329, 'g'], ['13', 2199, 1556, 'b'], ['15', 2480, 1536, 'b'], ['520', 2245, 1607, 'b'], ['20', 2548, 1656, 'b'], ['20', 2009, 1712, 'b'], ['134', 2798.5, 1381, 'g'], ['132', 2866, 1476, 'g'], ['116', 3016, 1454, 'g'], ['10', 2875, 1619, 'b'], ['30', 3327, 1236, 'b'], ['30', 3221, 1662, 'b'], ['', 3340, 1607, 'g'], ['5', 2943, 1724, 'b']].forEach(s => shield(...s));

// Trans-Canada markers
[[2800, 1050], [3095, 1149], [2533.5, 1225], [2342, 1500]].forEach(([x, y]) => {
  const g = add('g', { transform: `translate(${x} ${y})` });
  add('rect', { x: -18.5, y: -19, width: 37, height: 38, rx: 3, fill: '#45926a' }, g);
  add('path', { d: 'M0-17L3.5-11 7-12.5 7-6 10.500-10 12-7.500 16.500-8 15.500-3.500 17.500-1 13.500 4 15 8 10 9 6.500 14 .8 12.500V17H-.8V12.500L-6.500 14-10 9-15 8-13.500 4-17.500-1-15.500-3.500-16.500-8-12-7.500-10.500-10-7-6-7-12.500-3.500-11z', fill: '#fff', 'stroke-linejoin': 'round' }, g);
});

// Airport marker
add('path', { d: 'M2095 1640a25.500 25.500 0 1 1 48 8q-4 8-16 16l-14-4z', fill: '#fff' });
add('circle', { cx: 2120, cy: 1635.5, r: 21, fill: '#3a6fe0' });
add('path', { d: 'M2122 1626l11 10v4l-11-4z', fill: '#fff' });

// Place names: text, left, right, baseline, size, weight, colour, style
const label = (t, x1, x2, y, s, w, c, st) => add('text', Object.assign({ x: x1, y, 'font-size': s, 'font-weight': w || 400, fill: c || '#3c4043', stroke: '#fff', 'stroke-opacity': .9, 'stroke-width': s > 40 ? 7 : 5, 'stroke-linejoin': 'round', 'paint-order': 'stroke', 'font-style': st || 'normal' }, x2 ? { textLength: x2 - x1 } : {}), map, t);
const G = '#5f6368', K = '#2f3237';
[['Bo', 2012, 0, 723, 26], ['PI', 2015, 0, 783, 21, 400, G], ['me', 2008, 0, 850, 28], ['Laval', 2198, 2280, 1002, 35, 500, K], ['MONTRÉAL-NORD', 2440.5, 2629, 996, 20.5, 500, G], ['ROSE', 2011, 2064, 1019, 20.5, 500, G], ['Varennes', 3065, 3175, 658, 27], ['TRAND', 2700, 2772, 737, 20.5, 500, G], ['ES-PRAIRIES', 2697, 2827, 764.5, 20.5, 500, '#45494d'], ['AIRIES—', 2701, 2816, 814, 26, 500, '#45494d'], ['REMBLES', 2690, 2816, 841, 26, 500, '#45494d'], ['Montréal-Est', 2824, 2972, 882.5, 27], ['ANJOU', 2705.5, 2779, 970, 20.5, 500, G], ['Boucherville', 3052, 3194.5, 1068, 27], ['Desroches Mongeon', 2705, 2987, 1139, 30, 400, '#a52a22'], ['Avocats Inc', 2704.5, 2865, 1169.5, 30, 400, '#a52a22'], ['ÉE', 2014, 2038, 1320, 20.5, 500, G], ['Island of', 2291.5, 2394, 1415.5, 27, 400, K, 'italic'], ['Montreal', 2291, 2394, 1442, 27, 400, K, 'italic'], ['Mt Royal', 2406, 2507, 1421, 27], ['SAINT-LAURENT', 2173, 2347, 1474, 20.5, 500, G], ['Montreal', 2589, 2817, 1488, 54, 500, K], ['Westmount', 2545.5, 2680, 1552, 27], ['Côte Saint-Luc', 2281, 2451, 1632, 27], ['VERDUN', 2673, 2760, 1655.5, 20.5, 500, G], ['Dorval', 2080, 2156, 1714, 27], ['LACHINE', 2255, 2352, 1751, 20.5, 500, '#a5a8ac'], ['St-Br', 3278, 3336, 1349, 27], ['LE VIEUX-LONGUEUIL', 2881.5, 3185, 1384, 25, 500, '#45494d'], ['Longueuil', 3057, 3211, 1427, 34, 500, K], ['SAINT-HUBERT', 3066, 3227, 1467, 20.5, 500, G], ['Saint-Lambert', 2825, 2988, 1522, 27], ['Brossard', 2989.5, 3094, 1708, 27]].forEach(l => label(...l));

const river = (t, x, y, a, len) => add('text', { transform: `translate(${x} ${y}) rotate(${a})`, 'font-size': 24, fill: '#3c8ca5', textLength: len }, map, t);
river('St Lawrence River', 2975, 760, -91, 178);
river('St Lawrence River', 3048, 1016, -81, 172);
add('path', { id: 'prairies', d: 'M2327 1254Q2372 1206 2391 1136', fill: 'none' });
const pr = add('text', { 'font-size': 23, fill: '#3c8ca5' });
add('textPath', { href: '#prairies' }, pr, 'Prairies River');

// Destination pin
add('path', { d: 'M2670.500 1185C2667 1160 2643 1150 2643 1131A27.500 27.500 0 0 1 2698 1131C2698 1150 2674 1160 2670.500 1185z', fill: '#d6503f', stroke: '#b3312a', 'stroke-width': 2 });
add('circle', { cx: 2670.5, cy: 1131.5, r: 11, fill: '#a1261d' });

// Map wordmark
const wm = add('text', { x: 2620, y: 1690, 'font-size': 33, textLength: 102, 'font-weight': 500, stroke: '#fff', 'stroke-width': 4, 'paint-order': 'stroke', class: 'font-[Lato,sans-serif]' });
[['G', '#4285f4'], ['o', '#d94f3f'], ['o', '#f2b93a'], ['g', '#4285f4'], ['l', '#4fa65a'], ['e', '#d94f3f']].forEach(([c, fill]) => add('tspan', { fill, stroke: '#fff' }, wm, c));
</script>
</body>
</html>
